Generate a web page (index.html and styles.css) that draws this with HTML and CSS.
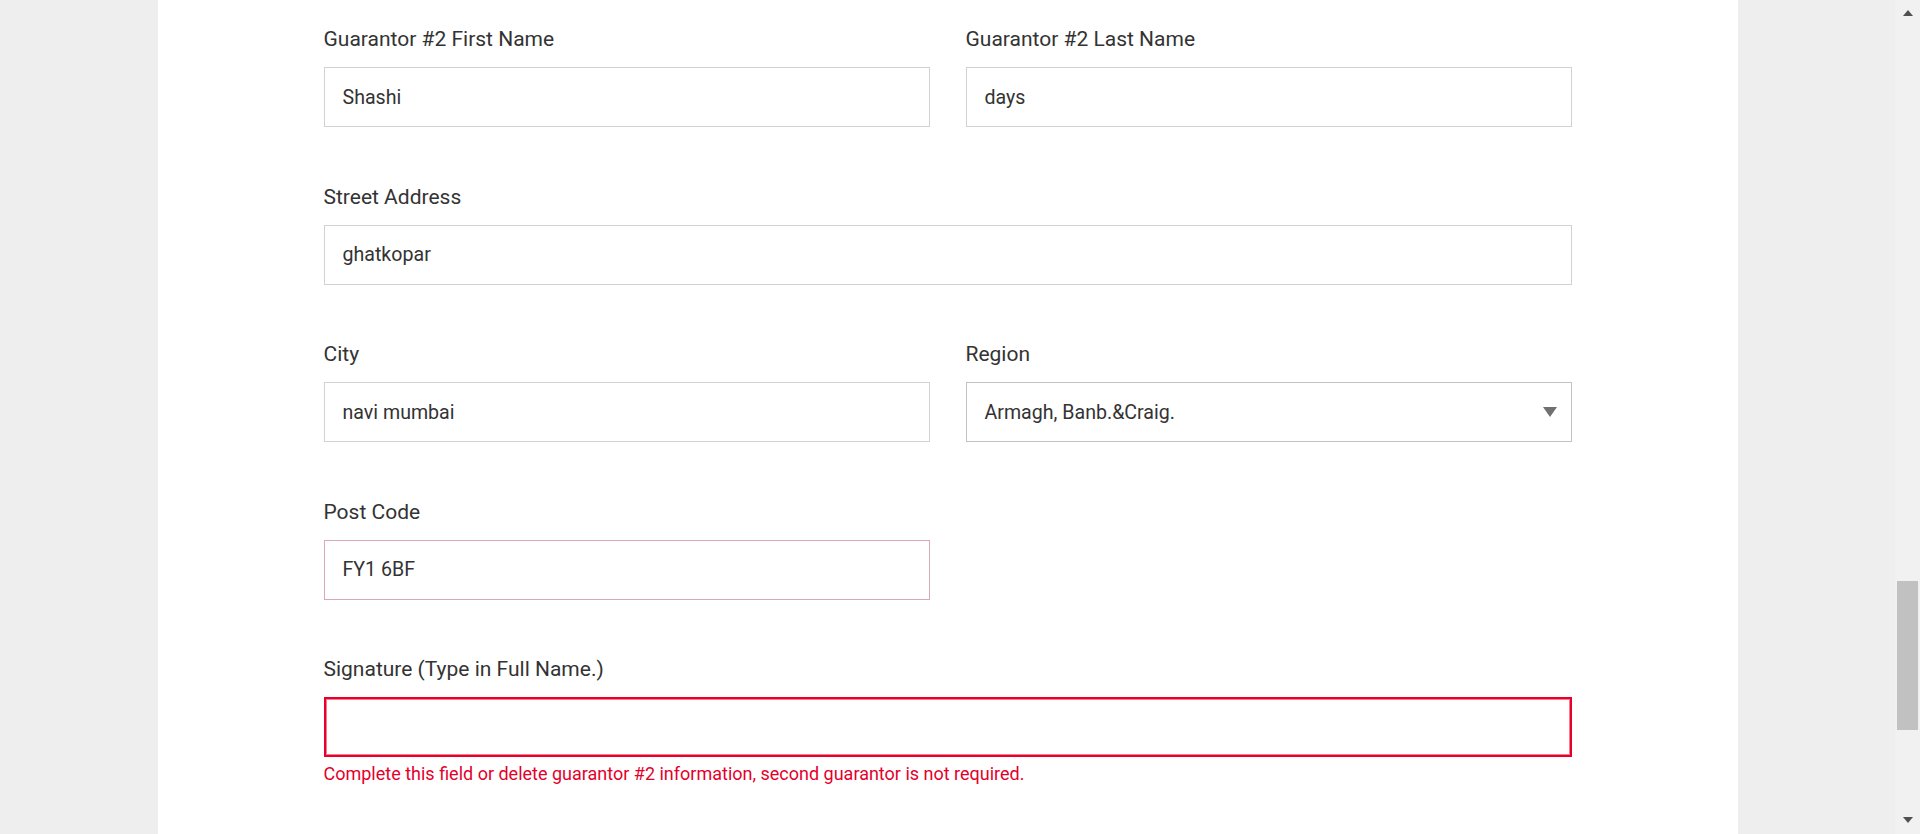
FILE: index.html
```html
<!DOCTYPE html>
<html lang="en">
<head>
<meta charset="utf-8">
<title>Guarantor form</title>
<link rel="stylesheet" href="styles.css">
</head>
<body>
<div class="page">
  <main class="main">
    <div class="panel">
      <form class="form">
        <div class="row two">
          <div class="field">
            <label class="label">Guarantor #2 First Name</label>
            <div class="input">Shashi</div>
          </div>
          <div class="field">
            <label class="label">Guarantor #2 Last Name</label>
            <div class="input">days</div>
          </div>
        </div>
        <div class="row">
          <div class="field">
            <label class="label">Street Address</label>
            <div class="input">ghatkopar</div>
          </div>
        </div>
        <div class="row two">
          <div class="field">
            <label class="label">City</label>
            <div class="input">navi mumbai</div>
          </div>
          <div class="field">
            <label class="label">Region</label>
            <div class="input select"><span>Armagh, Banb.&amp;Craig.</span><span class="caret"></span></div>
          </div>
        </div>
        <div class="row two">
          <div class="field">
            <label class="label">Post Code</label>
            <div class="input warn">FY1 6BF</div>
          </div>
        </div>
        <div class="row">
          <div class="field">
            <label class="label">Signature (Type in Full Name.)</label>
            <div class="input error"></div>
            <div class="error-text">Complete this field or delete guarantor #2 information, second guarantor is not required.</div>
          </div>
        </div>
      </form>
    </div>
  </main>
  <div class="scrollbar">
    <div class="sb-btn"><span class="sb-up"></span></div>
    <div class="sb-gap"></div>
    <div class="sb-thumb"></div>
    <div class="sb-rest"></div>
    <div class="sb-btn sb-btn-down"><span class="sb-down"></span></div>
  </div>
</div>
</body>
</html>
```

FILE: styles.css
```css
html, body {
  margin: 0;
  padding: 0;
  height: 834px;
  overflow: hidden;
  background: #eeeeee;
  font-family: Roboto, "Liberation Sans", Arial, sans-serif;
}

.page {
  display: flex;
  height: 834px;
}

.main {
  flex: 1;
  display: flex;
  justify-content: center;
}

.panel {
  width: 1580px;
  height: 834px;
  background: #ffffff;
  box-sizing: border-box;
  padding: 26px 166px 0;
}

.form {
  display: flex;
  flex-direction: column;
}

.row {
  display: grid;
  grid-template-columns: 1fr;
  column-gap: 36px;
  margin-bottom: 56.5px;
}

.row.two {
  grid-template-columns: 606px 606px;
}

.field {
  display: flex;
  flex-direction: column;
}

.label {
  font-size: 21px;
  line-height: 27px;
  color: #333333;
  margin-bottom: 14px;
}

.input {
  height: 60px;
  box-sizing: border-box;
  border: 1px solid #d2d2d2;
  background: #ffffff;
  padding: 0 18px;
  font-size: 19.6px;
  color: #333333;
  display: flex;
  align-items: center;
}

.input.select {
  border-color: #c2c2c2;
  justify-content: space-between;
  padding-right: 14px;
}

.caret {
  width: 0;
  height: 0;
  border-left: 7.5px solid transparent;
  border-right: 7.5px solid transparent;
  border-top: 10px solid #707070;
}

.input.warn {
  border-color: #dba9b4;
}

.input.error {
  border: 2px solid #e8002b;
  box-shadow: inset 0 0 0 1px #f47b90;
}

.error-text {
  margin-top: 5px;
  font-size: 18px;
  line-height: 24px;
  color: #e4002b;
}

.scrollbar {
  width: 25px;
  height: 834px;
  background: #f1f1f1;
  display: flex;
  flex-direction: column;
  align-items: center;
}

.sb-btn {
  height: 17px;
  width: 25px;
  display: flex;
  justify-content: center;
  align-items: center;
}

.sb-up {
  width: 0;
  height: 0;
  margin-top: 9px;
  border-left: 5.5px solid transparent;
  border-right: 5.5px solid transparent;
  border-bottom: 6px solid #505050;
}

.sb-gap {
  height: 564px;
}

.sb-thumb {
  width: 21px;
  height: 149px;
  background: #c1c1c1;
}

.sb-rest {
  flex: 1;
}

.sb-btn-down {
  align-items: flex-start;
}

.sb-down {
  width: 0;
  height: 0;
  margin-top: 0;
  border-left: 5.5px solid transparent;
  border-right: 5.5px solid transparent;
  border-top: 6px solid #505050;
}
```
